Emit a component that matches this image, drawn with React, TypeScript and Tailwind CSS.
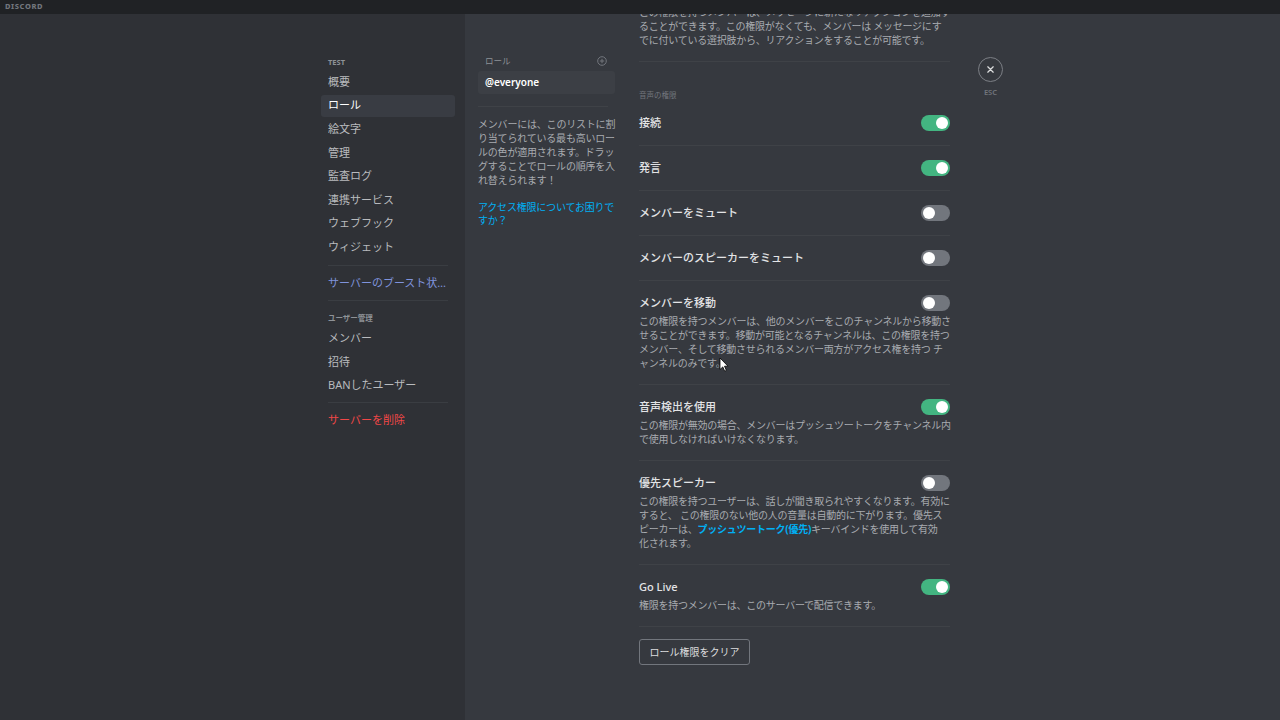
import React from 'react';

type Perm = { title: string; on: boolean; desc?: React.ReactNode[] };

const perms: Perm[] = [
  { title: '接続', on: true },
  { title: '発言', on: true },
  { title: 'メンバーをミュート', on: false },
  { title: 'メンバーのスピーカーをミュート', on: false },
  {
    title: 'メンバーを移動',
    on: false,
    desc: [
      'この権限を持つメンバーは、他のメンバーをこのチャンネルから移動さ',
      'せることができます。移動が可能となるチャンネルは、この権限を持つ',
      'メンバー、そして移動させられるメンバー両方がアクセス権を持つ チ',
      'ャンネルのみです。',
    ],
  },
  {
    title: '音声検出を使用',
    on: true,
    desc: [
      'この権限が無効の場合、メンバーはプッシュツートークをチャンネル内',
      'で使用しなければいけなくなります。',
    ],
  },
  {
    title: '優先スピーカー',
    on: false,
    desc: [
      'この権限を持つユーザーは、話しが聞き取られやすくなります。有効に',
      'すると、 この権限のない他の人の音量は自動的に下がります。優先ス',
      <>
        ピーカーは、<span className="font-bold text-[#00b0f4]">プッシュツートーク(優先)</span>キーバインドを使用して有効
      </>,
      '化されます。',
    ],
  },
  {
    title: 'Go Live',
    on: true,
    desc: ['権限を持つメンバーは、このサーバーで配信できます。'],
  },
];

const navTop = ['概要', 'ロール', '絵文字', '管理', '監査ログ', '連携サービス', 'ウェブフック', 'ウィジェット'];
const navUsers = ['メンバー', '招待', 'BANしたユーザー'];

function Toggle({ on }: { on: boolean }) {
  return (
    <div
      className={`flex h-[16px] w-[29px] shrink-0 items-center rounded-full px-[2px] ${
        on ? 'justify-end bg-[#43b581]' : 'justify-start bg-[#72767d]'
      }`}
    >
      <div className="h-[12px] w-[12px] rounded-full bg-white" />
    </div>
  );
}

function NavItem({ label, active, color }: { label: string; active?: boolean; color?: string }) {
  return (
    <div
      className={`mb-[1.6px] flex h-[22px] items-center truncate rounded-[3px] px-[7px] text-[11px] ${
        active ? 'bg-[#393c43] text-white' : color ?? 'text-[#b9bbbe]'
      }`}
    >
      <span className="truncate">{label}</span>
    </div>
  );
}

function Desc({ lines, className = '' }: { lines: React.ReactNode[]; className?: string }) {
  return (
    <div className={`text-[10px] leading-[14px] tracking-[-0.25px] text-[#a8abb0] ${className}`}>
      {lines.map((l, i) => (
        <div key={i} className="whitespace-nowrap">
          {l}
        </div>
      ))}
    </div>
  );
}

export default function App() {
  return (
    <div className="relative h-[720px] w-[1280px] overflow-hidden bg-[#36393f] font-['Noto_Sans','Noto_Sans_CJK_JP',sans-serif]">
      {/* Title bar */}
      <div className="flex h-[14px] items-center bg-[#202225] px-[5px]">
        <span className="text-[7.5px] font-extrabold tracking-[0.6px] text-[#72767d]">DISCORD</span>
      </div>

      <div className="flex h-[706px] overflow-hidden">
        {/* Sidebar */}
        <div className="flex w-[465px] shrink-0 justify-end bg-[#2f3136] pr-[10px] pt-[41px]">
          <div className="w-[134px]">
            <div className="mb-[2px] h-[14px] px-[7px] text-[7.5px] font-bold leading-[14px] text-[#8e9297]">TEST</div>
            {navTop.map((n) => (
              <NavItem key={n} label={n} active={n === 'ロール'} />
            ))}
            <div className="mx-[7px] mb-[6px] mt-[7px] h-px bg-[#3a3d42]" />
            <NavItem label="サーバーのブースト状況" color="text-[#7f93dc]" />
            <div className="mx-[7px] my-[6px] h-px bg-[#3a3d42]" />
            <div className="mb-[2px] mt-[10px] h-[14px] px-[7px] text-[7.5px] font-bold leading-[14px] text-[#8e9297]">
              ユーザー管理
            </div>
            {navUsers.map((n) => (
              <NavItem key={n} label={n} />
            ))}
            <div className="mx-[7px] my-[6px] h-px bg-[#3a3d42]" />
            <NavItem label="サーバーを削除" color="text-[#f04747]" />
          </div>
        </div>

        {/* Roles column */}
        <div className="w-[150px] shrink-0 pl-[13px] pt-[41px]">
          <div className="flex h-[12px] items-center justify-between pl-[7px] pr-[8px]">
            <span className="text-[8.5px] text-[#8e9297]">ロール</span>
            <svg width="10" height="10" viewBox="0 0 10 10" fill="none" stroke="#72767d" strokeWidth="1">
              <circle cx="5" cy="5" r="4.3" />
              <path d="M5 2.8v4.4M2.8 5h4.4" />
            </svg>
          </div>
          <div className="mt-[4px] flex h-[23px] w-[137px] items-center rounded-[3px] bg-[#3c3f45] px-[7px] text-[10px] font-semibold text-white">
            @everyone
          </div>
          <div className="mt-[12px] h-px w-[130px] bg-[#3f4247]" />
          <div className="mt-[10px] text-[10px] leading-[14px] tracking-[-0.2px] text-[#a8abb0]">
            <div className="whitespace-nowrap">メンバーには、このリストに割</div>
            <div className="whitespace-nowrap">り当てられている最も高いロー</div>
            <div className="whitespace-nowrap">ルの色が適用されます。ドラッ</div>
            <div className="whitespace-nowrap">グすることでロールの順序を入</div>
            <div className="whitespace-nowrap">れ替えられます！</div>
          </div>
          <div className="mt-[14px] text-[10px] leading-[13px] tracking-[-0.2px] text-[#00b0f4]">
            <div className="whitespace-nowrap">アクセス権限についてお困りで</div>
            <div className="whitespace-nowrap">すか？</div>
          </div>
        </div>

        {/* Permissions */}
        <div className="ml-[24px] -mt-[9px] w-[311px] shrink-0">
          <div className="border-b border-[#3f4247] pb-[14px]">
            <Desc
              lines={[
                'この権限を持つメンバーは、メッセージに新たなリアクションを追加す',
                'ることができます。この権限がなくても、メンバーは メッセージにす',
                'でに付いている選択肢から、リアクションをすることが可能です。',
              ]}
            />
          </div>
          <div className="pb-px pt-[28px] text-[7.5px] leading-[10px] text-[#72767d]">音声の権限</div>
          {perms.map((p) => (
            <div
              key={p.title}
              className={`border-b border-[#3f4247] pt-3 ${p.desc ? 'pb-[14px]' : 'pb-3'}`}
            >
              <div className="flex h-5 items-center justify-between">
                <span className="text-[11px] font-medium text-[#e3e4e6]">{p.title}</span>
                <Toggle on={p.on} />
              </div>
              {p.desc && <Desc lines={p.desc} className="mt-px" />}
            </div>
          ))}
          <button className="mt-[12px] flex h-[26px] w-[111px] items-center justify-center rounded-[3px] border border-[#72767d] text-[10px] text-[#dcddde]">
            ロール権限をクリア
          </button>
        </div>

        {/* Close */}
        <div className="ml-[28px] flex w-[25px] shrink-0 flex-col items-center pt-[43px]">
          <div className="flex h-[25px] w-[25px] items-center justify-center rounded-full border-[1.5px] border-[#7c7f85]">
            <svg width="9" height="9" viewBox="0 0 10 10" stroke="#dcddde" strokeWidth="1.4" strokeLinecap="round">
              <path d="M2 2l6 6M8 2l-6 6" />
            </svg>
          </div>
          <div className="mt-[5px] text-[7.5px] font-semibold text-[#72767d]">ESC</div>
        </div>
      </div>

      {/* Mouse cursor */}
      <svg className="absolute left-[719px] top-[357px]" width="10" height="15" viewBox="0 0 10 15">
        <path d="M1 1v11.5l2.8-2.6 1.9 4.3 1.7-.8-1.9-4.2H9z" fill="#fff" stroke="#000" strokeWidth="0.8" />
      </svg>
    </div>
  );
}
